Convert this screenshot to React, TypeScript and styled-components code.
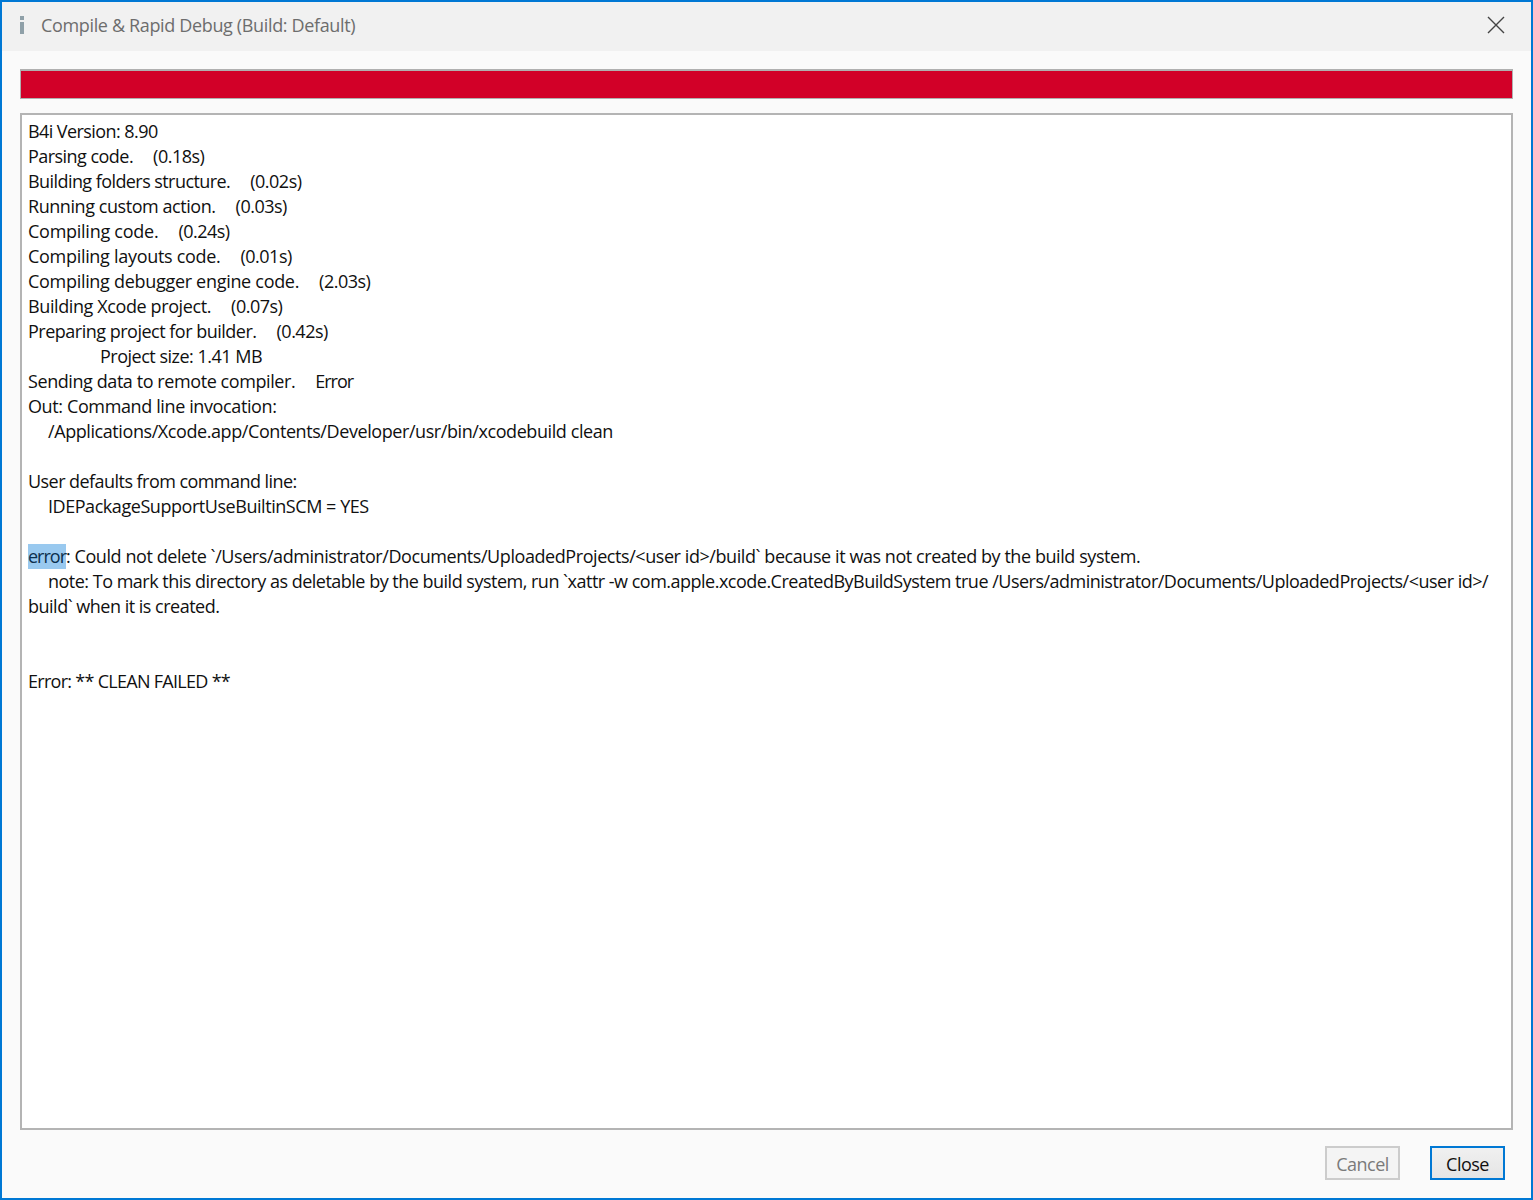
import React from 'react';
import styled, { createGlobalStyle } from 'styled-components';

const GlobalStyle = createGlobalStyle`
  html, body {
    margin: 0;
    padding: 0;
    background: #fafafa;
    font-family: "Open Sans", "Noto Sans", sans-serif;
  }
`;

const Window = styled.div`
  box-sizing: border-box;
  width: 1533px;
  height: 1200px;
  border: 2px solid #0078d4;
  background: #fafafa;
  display: flex;
  flex-direction: column;
`;

const TitleBar = styled.div`
  box-sizing: border-box;
  height: 49px;
  flex-shrink: 0;
  background: #f1f1f1;
  display: flex;
  align-items: center;
  padding: 0 26px 4px 17px;
`;

const InfoIcon = styled.svg`
  width: 6px;
  height: 18px;
  flex-shrink: 0;
  margin-right: 16px;
`;

const Title = styled.div`
  flex: 1;
  font-size: 18px;
  letter-spacing: -0.35px;
  color: #6d6d6d;
`;

const CloseIcon = styled.svg`
  width: 18px;
  height: 18px;
`;

const Body = styled.div`
  flex: 1;
  display: flex;
  flex-direction: column;
  padding: 18px 18px 0;
  min-height: 0;
`;

const ProgressBar = styled.div`
  box-sizing: border-box;
  height: 30px;
  flex-shrink: 0;
  border: 2px solid #b0b0b0;
  border-width: 2px 1px 1px 1px;
  background: #d20028;
`;

const LogBox = styled.div`
  box-sizing: border-box;
  height: 1017px;
  margin-top: 14px;
  flex-shrink: 0;
  border: 2px solid #b4b4b4;
  background: #ffffff;
  padding: 4px 6px;
  font-size: 18px;
  line-height: 25px;
  color: #101010;
`;

const Line = styled.div<{ $indent?: number; $spacing?: number }>`
  height: 25px;
  white-space: pre;
  padding-left: ${({ $indent }) => $indent ?? 0}px;
  letter-spacing: ${({ $spacing }) => $spacing ?? -0.42}px;
`;

const Timing = styled.span<{ $spacing?: number }>`
  margin-left: 20px;
  letter-spacing: ${({ $spacing }) => $spacing ?? -0.5}px;
`;

const Selected = styled.span`
  background: #99c9ef;
  display: inline-block;
  letter-spacing: -1px;
  color: #0c2f4c;
`;

const Footer = styled.div`
  flex: 1;
  display: flex;
  justify-content: flex-end;
  gap: 30px;
  padding: 16px 8px 0 0;
`;

const Button = styled.button<{ $primary?: boolean }>`
  box-sizing: border-box;
  width: 75px;
  height: 34px;
  padding: 2px 0 0;
  font-family: inherit;
  font-size: 18px;
  letter-spacing: -0.5px;
  border: 2px solid ${({ $primary }) => ($primary ? '#0078d4' : '#cccccc')};
  background: ${({ $primary }) => ($primary ? 'linear-gradient(#f0f0f0, #e5e5e5)' : '#f4f4f4')};
  color: ${({ $primary }) => ($primary ? '#101010' : '#7a7a7a')};
`;

const steps: [string, string, number][] = [
  ['Parsing code.', '(0.18s)', -0.54],
  ['Building folders structure.', '(0.02s)', -0.57],
  ['Running custom action.', '(0.03s)', -0.44],
  ['Compiling code.', '(0.24s)', -0.26],
  ['Compiling layouts code.', '(0.01s)', -0.3],
  ['Compiling debugger engine code.', '(2.03s)', -0.3],
  ['Building Xcode project.', '(0.07s)', -0.39],
  ['Preparing project for builder.', '(0.42s)', -0.5],
];

const App: React.FC = () => (
  <>
    <GlobalStyle />
    <Window>
      <TitleBar>
        <InfoIcon viewBox="0 0 6 18">
          <rect x="1" y="0" width="4" height="4" fill="#8fa0a8" />
          <rect x="1" y="6" width="4" height="12" fill="#8fa0a8" />
        </InfoIcon>
        <Title>Compile &amp; Rapid Debug (Build: Default)</Title>
        <CloseIcon viewBox="0 0 18 18">
          <path d="M1 1 L17 17 M17 1 L1 17" stroke="#444444" strokeWidth="1.4" fill="none" />
        </CloseIcon>
      </TitleBar>
      <Body>
        <ProgressBar />
        <LogBox>
          <Line $spacing={-0.57}>B4i Version: 8.90</Line>
          {steps.map(([label, time, spacing]) => (
            <Line key={label} $spacing={spacing}>
              {label}
              <Timing>{time}</Timing>
            </Line>
          ))}
          <Line $indent={72} $spacing={-0.5}>Project size: 1.41 MB</Line>
          <Line>
            Sending data to remote compiler.
            <Timing $spacing={-1}>Error</Timing>
          </Line>
          <Line $spacing={-0.38}>Out: Command line invocation:</Line>
          <Line $indent={20}>/Applications/Xcode.app/Contents/Developer/usr/bin/xcodebuild clean</Line>
          <Line />
          <Line $spacing={-0.55}>User defaults from command line:</Line>
          <Line $indent={20} $spacing={-0.45}>IDEPackageSupportUseBuiltinSCM = YES</Line>
          <Line />
          <Line $spacing={-0.43}>
            <Selected>error</Selected>
            {': Could not delete `/Users/administrator/Documents/UploadedProjects/<user id>/build` because it was not created by the build system.'}
          </Line>
          <Line $indent={20} $spacing={-0.505}>
            {'note: To mark this directory as deletable by the build system, run `xattr -w com.apple.xcode.CreatedByBuildSystem true /Users/administrator/Documents/UploadedProjects/<user id>/'}
          </Line>
          <Line $spacing={-0.5}>build` when it is created.</Line>
          <Line />
          <Line />
          <Line $spacing={-0.71}>Error: ** CLEAN FAILED **</Line>
        </LogBox>
        <Footer>
          <Button>Cancel</Button>
          <Button $primary>Close</Button>
        </Footer>
      </Body>
    </Window>
  </>
);

export default App;
